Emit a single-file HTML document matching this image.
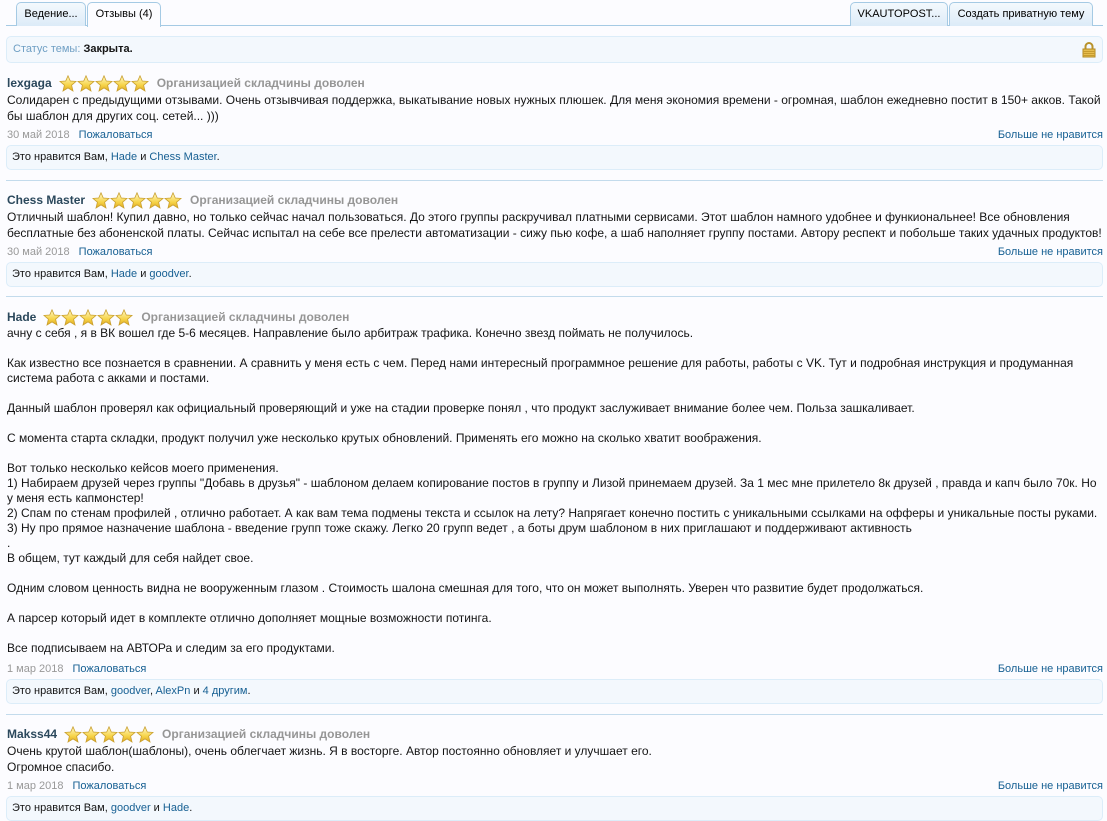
<!DOCTYPE html>
<html><head><meta charset="utf-8"><style>
*{margin:0;padding:0;box-sizing:border-box}
body{width:1107px;height:821px;background:#fcfcff;font-family:"Liberation Sans",Arial,sans-serif;font-size:12px;color:#141414;position:relative;overflow:hidden}
.a{position:absolute}
.tab{position:absolute;top:2px;height:24px;border:1px solid #a5cae4;border-bottom:none;border-radius:5px 5px 0 0;background:linear-gradient(#f4f9fd,#dcebf8);font-size:11px;line-height:22px;text-align:center;color:#000}
.tab.act{background:#fcfcff;height:25px}
a,.l{color:#176093;text-decoration:none}
.box{position:absolute;left:6px;width:1097px;border:1px solid #dcedf9;border-radius:5px;background:#f3f8fd}
.name{font-weight:bold;color:#2b485c;font-size:12px}
.grey{font-weight:bold;color:#969696;font-size:12px}
.hd{position:absolute;left:7px;height:16px;line-height:16px;white-space:nowrap;display:flex;align-items:center}
.stars{display:inline-flex;margin:0 8px 0 7px}
.txt{position:absolute;left:7px;width:1098px}
.dt{position:absolute;left:7px;width:1096px;font-size:11px;color:#999;line-height:14px}
.dt span.l{margin-left:9px}
.dt .r{position:absolute;right:0;top:0}
.lk{font-size:11px;line-height:23px;padding-left:5px;color:#141414}
.sep{position:absolute;left:6px;width:1097px;height:1px;background:#c3dbec}
</style></head><body>
<svg width="0" height="0" style="position:absolute"><defs>
<linearGradient id="g" x1="0" y1="0" x2="0" y2="1"><stop offset="0" stop-color="#fff8c8"/><stop offset=".6" stop-color="#f7d54a"/><stop offset="1" stop-color="#e0a820"/></linearGradient>
<symbol id="s" viewBox="0 0 18 17"><polygon points="9,0.8 11.3,6 17,6.4 12.6,10.2 14,16 9,12.9 4,16 5.4,10.2 1,6.4 6.7,6" fill="url(#g)" stroke="#c9a030" stroke-width=".8"/></symbol>
</defs></svg>

<div class="a" style="left:6px;top:25px;width:1097px;height:1px;background:#a5cae4"></div>
<div class="tab" style="left:16px;width:70px">Ведение...</div>
<div class="tab act" style="left:87px;width:74px">Отзывы (4)</div>
<div class="tab" style="left:850px;width:98px">VKAUTOPOST...</div>
<div class="tab" style="left:949px;width:144px">Создать приватную тему</div>

<div class="box" style="top:36px;height:27px;line-height:25px;padding-left:6px;font-size:11px"><span style="color:#6f9fc4">Статус темы:</span> <b>Закрыта.</b>
<svg class="a" style="right:6px;top:5px" width="14" height="16" viewBox="0 0 14 16"><path d="M3.5 7V4.5a3.5 3.5 0 0 1 7 0V7" fill="none" stroke="#b8922a" stroke-width="2"/><rect x="1" y="7" width="12" height="8" fill="#e6bd4e" stroke="#b38a24"/><path d="M1 9.5h12M1 11.5h12M1 13.5h12" stroke="#c79b2e"/></svg></div>

<!-- post 1 -->
<div class="hd" style="top:75px"><span class="name">lexgaga</span><span class="stars"><svg width="18" height="17"><use href="#s"/></svg><svg width="18" height="17"><use href="#s"/></svg><svg width="18" height="17"><use href="#s"/></svg><svg width="18" height="17"><use href="#s"/></svg><svg width="18" height="17"><use href="#s"/></svg></span><span class="grey">Организацией складчины доволен</span></div>
<div class="txt" style="top:92px;line-height:16px">Солидарен с предыдущими отзывами. Очень отзывчивая поддержка, выкатывание новых нужных плюшек. Для меня экономия времени - огромная, шаблон ежедневно постит в 150+ акков. Такой бы шаблон для других соц. сетей... )))</div>
<div class="dt" style="top:128px">30 май 2018<span class="l">Пожаловаться</span><span class="r l">Больше не нравится</span></div>
<div class="box lk" style="top:145px;height:25px">Это нравится Вам, <a>Hade</a> и <a>Chess Master</a>.</div>
<div class="sep" style="top:180px"></div>

<!-- post 2 -->
<div class="hd" style="top:192px"><span class="name">Chess Master</span><span class="stars"><svg width="18" height="17"><use href="#s"/></svg><svg width="18" height="17"><use href="#s"/></svg><svg width="18" height="17"><use href="#s"/></svg><svg width="18" height="17"><use href="#s"/></svg><svg width="18" height="17"><use href="#s"/></svg></span><span class="grey">Организацией складчины доволен</span></div>
<div class="txt" style="top:209px;line-height:16px">Отличный шаблон! Купил давно, но только сейчас начал пользоваться. До этого группы раскручивал платными сервисами. Этот шаблон намного удобнее и функиональнее! Все обновления бесплатные без абоненской платы. Сейчас испытал на себе все прелести автоматизации - сижу пью кофе, а шаб наполняет группу постами. Автору респект и побольше таких удачных продуктов!</div>
<div class="dt" style="top:245px">30 май 2018<span class="l">Пожаловаться</span><span class="r l">Больше не нравится</span></div>
<div class="box lk" style="top:262px;height:25px">Это нравится Вам, <a>Hade</a> и <a>goodver</a>.</div>
<div class="sep" style="top:296px"></div>

<!-- post 3 -->
<div class="hd" style="top:309px"><span class="name">Hade</span><span class="stars"><svg width="18" height="17"><use href="#s"/></svg><svg width="18" height="17"><use href="#s"/></svg><svg width="18" height="17"><use href="#s"/></svg><svg width="18" height="17"><use href="#s"/></svg><svg width="18" height="17"><use href="#s"/></svg></span><span class="grey">Организацией складчины доволен</span></div>
<div class="txt" style="top:326px;line-height:15px">ачну с себя , я в ВК вошел где 5-6 месяцев. Направление было арбитраж трафика. Конечно звезд поймать не получилось.<br><br>Как известно все познается в сравнении. А сравнить у меня есть с чем. Перед нами интересный программное решение для работы, работы с VK. Тут и подробная инструкция и продуманная система работа с акками и постами.<br><br>Данный шаблон проверял как официальный проверяющий и уже на стадии проверке понял , что продукт заслуживает внимание более чем. Польза зашкаливает.<br><br>С момента старта складки, продукт получил уже несколько крутых обновлений. Применять его можно на сколько хватит воображения.<br><br>Вот только несколько кейсов моего применения.<br>1) Набираем друзей через группы "Добавь в друзья" - шаблоном делаем копирование постов в группу и Лизой принемаем друзей. За 1 мес мне прилетело 8к друзей , правда и капч было 70к. Но у меня есть капмонстер!<br>2) Спам по стенам профилей , отлично работает. А как вам тема подмены текста и ссылок на лету? Напрягает конечно постить с уникальными ссылками на офферы и уникальные посты руками.<br>3) Ну про прямое назначение шаблона - введение групп тоже скажу. Легко 20 групп ведет , а боты друм шаблоном в них приглашают и поддерживают активность<br>.<br>В общем, тут каждый для себя найдет свое.<br><br>Одним словом ценность видна не вооруженным глазом . Стоимость шалона смешная для того, что он может выполнять. Уверен что развитие будет продолжаться.<br><br>А парсер который идет в комплекте отлично дополняет мощные возможности потинга.<br><br>Все подписываем на АВТОРа и следим за его продуктами.</div>
<div class="dt" style="top:662px">1 мар 2018<span class="l">Пожаловаться</span><span class="r l">Больше не нравится</span></div>
<div class="box lk" style="top:679px;height:25px">Это нравится Вам, <a>goodver</a>, <a>AlexPn</a> и <a>4 другим</a>.</div>
<div class="sep" style="top:714px"></div>

<!-- post 4 -->
<div class="hd" style="top:726px"><span class="name">Makss44</span><span class="stars"><svg width="18" height="17"><use href="#s"/></svg><svg width="18" height="17"><use href="#s"/></svg><svg width="18" height="17"><use href="#s"/></svg><svg width="18" height="17"><use href="#s"/></svg><svg width="18" height="17"><use href="#s"/></svg></span><span class="grey">Организацией складчины доволен</span></div>
<div class="txt" style="top:743px;line-height:16px">Очень крутой шаблон(шаблоны), очень облегчает жизнь. Я в восторге. Автор постоянно обновляет и улучшает его.<br>Огромное спасибо.</div>
<div class="dt" style="top:779px">1 мар 2018<span class="l">Пожаловаться</span><span class="r l">Больше не нравится</span></div>
<div class="box lk" style="top:796px;height:25px">Это нравится Вам, <a>goodver</a> и <a>Hade</a>.</div>
</body></html>
